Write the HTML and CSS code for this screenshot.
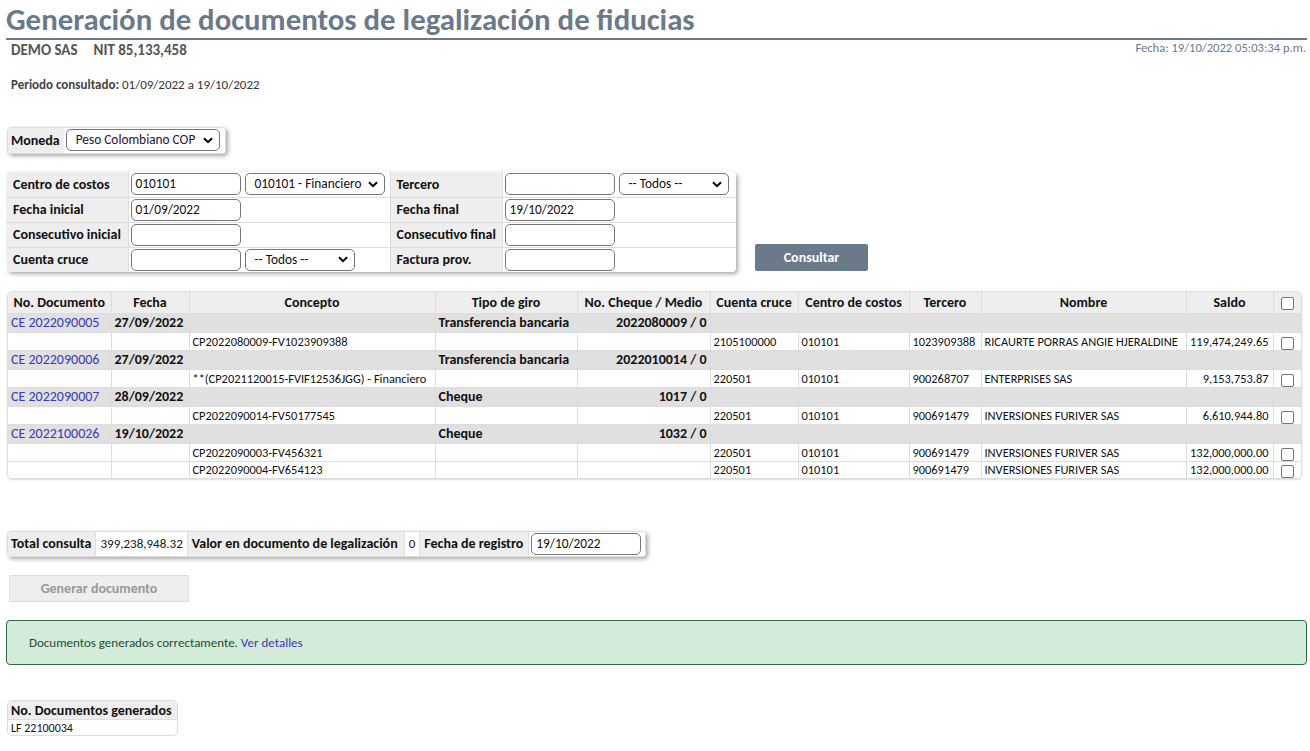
FILE: index.html
```html
<!DOCTYPE html>
<html lang="es">
<head>
<meta charset="utf-8">
<title>Generación de documentos de legalización de fiducias</title>
<link rel="stylesheet" href="styles.css">
</head>
<body>
<div class="page">
  <h1 class="title">Generación de documentos de legalización de fiducias</h1>
  <div class="subhead">
    <div class="company"><span>DEMO SAS</span><span>NIT 85,133,458</span></div>
    <div class="fecha">Fecha: 19/10/2022 05:03:34 p.m.</div>
  </div>
  <div class="periodo"><b>Periodo consultado:</b> 01/09/2022 a 19/10/2022</div>

  <div class="moneda">
    <div class="moneda-lbl">Moneda</div>
    <div class="moneda-val">
      <div class="select sel-moneda"><span>Peso Colombiano COP</span><svg class="chev" viewBox="0 0 10 7" width="10" height="7"><path d="M1 1.2 L5 5.2 L9 1.2" fill="none" stroke="#000" stroke-width="2"/></svg></div>
    </div>
  </div>

  <div class="filter-row">
    <table class="filters">
      <colgroup><col class="c-l1"><col class="c-v1"><col class="c-l2"><col class="c-v2"></colgroup>
      <tr>
        <th>Centro de costos</th>
        <td><div class="pair"><div class="input">010101</div><div class="select sel-cc"><span>010101 - Financiero</span><svg class="chev" viewBox="0 0 10 7" width="10" height="7"><path d="M1 1.2 L5 5.2 L9 1.2" fill="none" stroke="#000" stroke-width="2"/></svg></div></div></td>
        <th>Tercero</th>
        <td><div class="pair"><div class="input"></div><div class="select sel-ter"><span>-- Todos --</span><svg class="chev" viewBox="0 0 10 7" width="10" height="7"><path d="M1 1.2 L5 5.2 L9 1.2" fill="none" stroke="#000" stroke-width="2"/></svg></div></div></td>
      </tr>
      <tr>
        <th>Fecha inicial</th>
        <td><div class="input">01/09/2022</div></td>
        <th>Fecha final</th>
        <td><div class="input">19/10/2022</div></td>
      </tr>
      <tr>
        <th>Consecutivo inicial</th>
        <td><div class="input"></div></td>
        <th>Consecutivo final</th>
        <td><div class="input"></div></td>
      </tr>
      <tr>
        <th>Cuenta cruce</th>
        <td><div class="pair"><div class="input"></div><div class="select sel-cu"><span>-- Todos --</span><svg class="chev" viewBox="0 0 10 7" width="10" height="7"><path d="M1 1.2 L5 5.2 L9 1.2" fill="none" stroke="#000" stroke-width="2"/></svg></div></div></td>
        <th>Factura prov.</th>
        <td><div class="input"></div></td>
      </tr>
    </table>
    <button class="btn-consultar">Consultar</button>
  </div>

  <div class="grid-wrap">
    <table class="grid">
      <colgroup>
        <col class="w103"><col class="w78"><col class="w246"><col class="w142"><col class="w133"><col class="w88"><col class="w111"><col class="w72"><col class="w205"><col class="w87"><col class="w28">
      </colgroup>
      <thead>
        <tr>
          <th>No. Documento</th><th>Fecha</th><th>Concepto</th><th>Tipo de giro</th><th>No. Cheque / Medio</th><th>Cuenta cruce</th><th>Centro de costos</th><th>Tercero</th><th>Nombre</th><th>Saldo</th><th><span class="chk"></span></th>
        </tr>
      </thead>
      <tbody>
        <tr class="grp"><td><a class="doc">CE 2022090005</a></td><td>27/09/2022</td><td></td><td>Transferencia bancaria</td><td class="r">2022080009 / 0</td><td></td><td></td><td></td><td></td><td></td><td></td></tr>
        <tr class="det"><td></td><td></td><td>CP2022080009-FV1023909388</td><td></td><td></td><td>2105100000</td><td>010101</td><td>1023909388</td><td>RICAURTE PORRAS ANGIE HJERALDINE</td><td class="r">119,474,249.65</td><td class="c"><span class="chk"></span></td></tr>
        <tr class="grp"><td><a class="doc">CE 2022090006</a></td><td>27/09/2022</td><td></td><td>Transferencia bancaria</td><td class="r">2022010014 / 0</td><td></td><td></td><td></td><td></td><td></td><td></td></tr>
        <tr class="det"><td></td><td></td><td>**(CP2021120015-FVIF12536JGG) - Financiero</td><td></td><td></td><td>220501</td><td>010101</td><td>900268707</td><td>ENTERPRISES SAS</td><td class="r">9,153,753.87</td><td class="c"><span class="chk"></span></td></tr>
        <tr class="grp"><td><a class="doc">CE 2022090007</a></td><td>28/09/2022</td><td></td><td>Cheque</td><td class="r">1017 / 0</td><td></td><td></td><td></td><td></td><td></td><td></td></tr>
        <tr class="det"><td></td><td></td><td>CP2022090014-FV50177545</td><td></td><td></td><td>220501</td><td>010101</td><td>900691479</td><td>INVERSIONES FURIVER SAS</td><td class="r">6,610,944.80</td><td class="c"><span class="chk"></span></td></tr>
        <tr class="grp"><td><a class="doc">CE 2022100026</a></td><td>19/10/2022</td><td></td><td>Cheque</td><td class="r">1032 / 0</td><td></td><td></td><td></td><td></td><td></td><td></td></tr>
        <tr class="det"><td></td><td></td><td>CP2022090003-FV456321</td><td></td><td></td><td>220501</td><td>010101</td><td>900691479</td><td>INVERSIONES FURIVER SAS</td><td class="r">132,000,000.00</td><td class="c"><span class="chk"></span></td></tr>
        <tr class="det last"><td></td><td></td><td>CP2022090004-FV654123</td><td></td><td></td><td>220501</td><td>010101</td><td>900691479</td><td>INVERSIONES FURIVER SAS</td><td class="r">132,000,000.00</td><td class="c"><span class="chk"></span></td></tr>
      </tbody>
    </table>
  </div>

  <div class="totals">
    <div class="t-lbl">Total consulta</div>
    <div class="t-val">399,238,948.32</div>
    <div class="t-lbl">Valor en documento de legalización</div>
    <div class="t-val">0</div>
    <div class="t-lbl">Fecha de registro</div>
    <div class="t-val t-inp"><div class="input">19/10/2022</div></div>
  </div>

  <button class="btn-generar">Generar documento</button>

  <div class="alert">Documentos generados correctamente. <a class="link">Ver detalles</a></div>

  <table class="gen">
    <tr><th>No. Documentos generados</th></tr>
    <tr><td>LF 22100034</td></tr>
  </table>
</div>
</body>
</html>
```

FILE: styles.css
```css
* { box-sizing: border-box; }
html, body { margin: 0; padding: 0; background: #fff; }
body {
  font-family: "Carlito", "Calibri", "Liberation Sans Narrow", "DejaVu Sans Condensed", "Liberation Sans", sans-serif;
  color: #111;
  font-size: 12px;
}
.page { padding: 0 3px 0 6px; }

.title {
  margin: 0;
  padding-top: 1px;
  font-size: 30.8px;
  line-height: 37px;
  font-weight: bold;
  color: #6b7a8a;
  border-bottom: 2px solid #6b7a8a;
}

.subhead { display: flex; justify-content: space-between; align-items: flex-start; }
.company { padding: 1px 0 0 5px; font-size: 15px; font-weight: bold; color: #555; line-height: 19px; }
.company span + span { margin-left: 16px; }
.fecha { font-size: 12.6px; color: #6b7a8a; padding-top: 0; padding-right: 1px; line-height: 16px; }

.periodo { margin: 17px 0 0 5px; font-size: 13px; color: #333; line-height: 16px; }
.periodo b { color: #444; }

.moneda {
  display: inline-flex;
  margin: 34px 0 0 1px;
  border: 1px solid #ddd;
  border-radius: 4px;
  box-shadow: 2px 2px 4px rgba(0,0,0,0.35);
  overflow: hidden;
  height: 27px;
}
.moneda-lbl { background: #eee; font-weight: bold; font-size: 14px; padding: 0 4px 0 3px; line-height: 25px; color: #111; }
.moneda-val { background: #fff; padding: 1px 5px 0 2px; }

.select, .input {
  height: 22px;
  border: 1px solid #767676;
  border-radius: 5px;
  background: #fff;
  font-size: 13.33px;
  line-height: 20px;
  padding: 0 4px;
  color: #111;
  white-space: nowrap;
}
.select { display: flex; align-items: center; justify-content: space-between; padding: 0 6px 0 9px; }
.select .chev { flex: none; }
.sel-moneda { width: 154px; color: #2a1236; }
.sel-cc { width: 140px; }
.sel-ter { width: 110px; }
.sel-cu { width: 110px; }
.input { width: 110px; }

.filter-row { display: flex; align-items: flex-end; margin-top: 18px; }
.filters {
  border-collapse: collapse;
  margin-left: 1px;
  box-shadow: 2px 2px 4px rgba(0,0,0,0.35);
  border-radius: 4px;
}
.filters th, .filters td { border: 1px solid #ddd; height: 25px; }
.filters th { background: #eee; font-size: 14px; font-weight: bold; text-align: left; padding: 0 2px 0 6px; white-space: nowrap; }
.filters td { padding: 0 2px; }
.filters tr:first-child th, .filters tr:first-child td { border-top: none; }
.filters tr:last-child th, .filters tr:last-child td { border-bottom: none; }
.filters th:first-child { border-left: none; }
.filters td:last-child { border-right: none; }
.c-l1 { width: 121px; }
.c-v1 { width: 262px; }
.c-l2 { width: 112px; }
.c-v2 { width: 234px; }
.pair { display: flex; gap: 4px; }

.btn-consultar {
  margin: 0 0 1px 19px;
  width: 113px;
  height: 27px;
  background: #6b7a8a;
  color: #fff;
  border: none;
  border-radius: 2px;
  font-family: inherit;
  font-weight: bold;
  font-size: 14px;
}

.grid-wrap {
  margin: 19px 0 0 1px;
  width: 1295px;
  border: 1px solid #ddd;
  border-radius: 5px;
  overflow: hidden;
  box-shadow: 0 1px 2px rgba(0,0,0,0.15);
}
.grid { border-collapse: collapse; table-layout: fixed; width: 100%; }
.w103 { width: 103px; } .w78 { width: 78px; } .w246 { width: 246px; } .w142 { width: 142px; }
.w133 { width: 133px; } .w88 { width: 88px; } .w111 { width: 111px; } .w72 { width: 72px; }
.w205 { width: 205px; } .w87 { width: 87px; } .w28 { width: 28px; }
.grid th, .grid td { border: 1px solid #ddd; white-space: nowrap; overflow: hidden; padding: 0 3px; }
.grid tr:first-child th { border-top: none; }
.grid tr:last-child td { border-bottom: none; }
.grid th:first-child, .grid td:first-child { border-left: none; }
.grid th:last-child, .grid td:last-child { border-right: none; }
.grid thead th { background: #eee; font-size: 14px; font-weight: bold; line-height: 21px; text-align: center; padding: 0 2px; }
.grid .grp td { background: #e0e0e0; font-size: 14px; font-weight: bold; line-height: 18px; }
.grid .det td { background: #fff; font-size: 12.4px; line-height: 17px; }
.grid .det.last td { line-height: 16px; }
.grid td.r { text-align: right; }
.grid td.c { text-align: center; }
.grid .det td.r { padding-right: 4px; }
.doc { color: #3a3ab8; font-weight: normal; text-decoration: none; }

.chk {
  display: inline-block;
  width: 13px;
  height: 13px;
  border: 1px solid #767676;
  border-radius: 2px;
  background: #fff;
  vertical-align: middle;
}

.totals {
  display: inline-flex;
  margin: 52px 0 0 1px;
  border: 1px solid #ddd;
  border-radius: 4px;
  box-shadow: 2px 2px 4px rgba(0,0,0,0.35);
  overflow: hidden;
  height: 26px;
}
.t-lbl { background: #eee; font-size: 14px; font-weight: bold; padding: 0 4px 0 3px; line-height: 24px; border-right: 1px solid #ddd; }
.t-lbl:nth-child(3) { padding-right: 6px; padding-left: 4px; }
.t-lbl:nth-child(5) { padding-right: 5px; padding-left: 4px; }
.t-val { background: #fff; font-size: 13px; padding: 0 4px; line-height: 24px; border-right: 1px solid #ddd; }
.t-val:last-child { border-right: none; }
.t-inp { padding: 1px 4px 0 2px; }

.btn-generar {
  display: block;
  margin: 18px 0 0 3px;
  width: 180px;
  height: 27px;
  background: #eee;
  border: 1px solid #ddd;
  color: #999;
  font-family: inherit;
  font-size: 14px;
  font-weight: bold;
}

.alert {
  margin: 18px 0 0 0;
  width: 1301px;
  height: 45px;
  background: #d4ebda;
  border: 1px solid #2f6b40;
  border-radius: 4px;
  padding: 0 0 0 22px;
  line-height: 43px;
  font-size: 13px;
  color: #234d2f;
}
.link { color: #3a3ab8; text-decoration: none; }

.gen {
  margin: 35px 0 0 1px;
  border-collapse: separate;
  border-spacing: 0;
  border: 1px solid #ddd;
  border-radius: 5px;
  overflow: hidden;
  width: 171px;
}
.gen th { background: #eee; font-size: 14px; font-weight: bold; text-align: left; padding: 0 3px; height: 19px; border-bottom: 1px solid #ddd; white-space: nowrap; }
.gen td { font-size: 12px; padding: 0 3px; height: 15px; line-height: 14px; }
```
